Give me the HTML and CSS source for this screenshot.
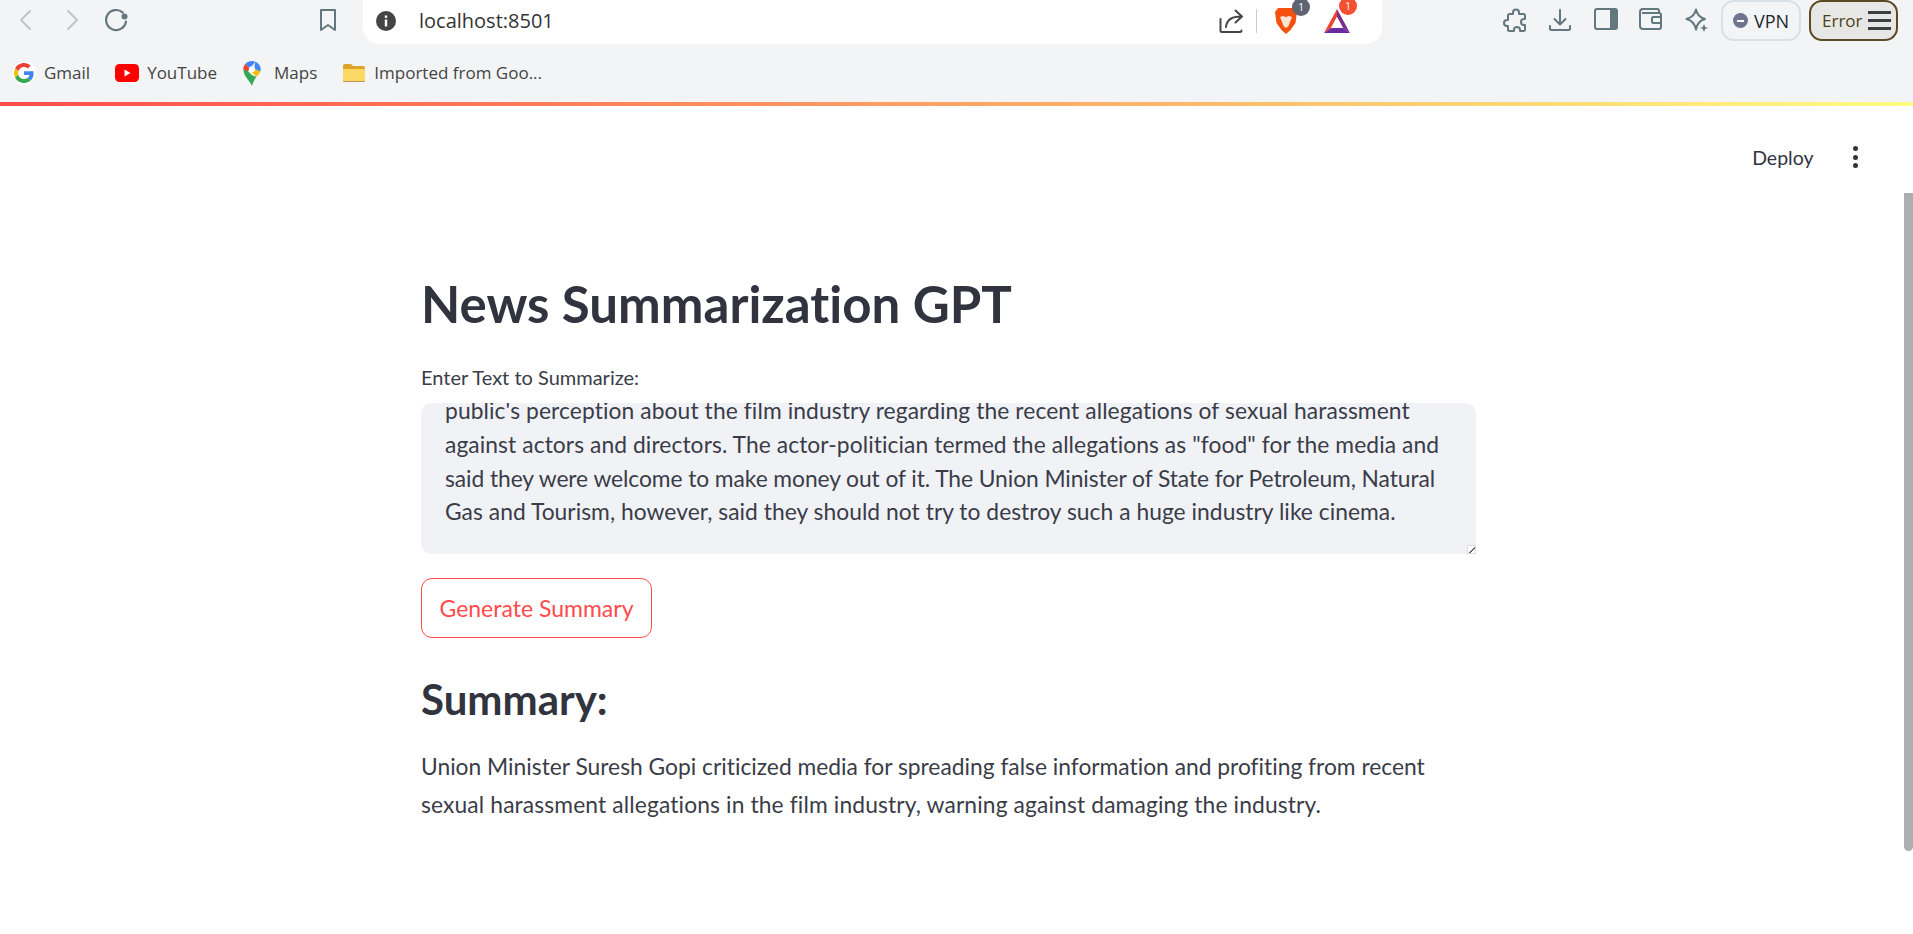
FILE: index.html
```html
<!DOCTYPE html>
<html lang="en">
<head>
    <meta charset="UTF-8" />
    <title>News Summarization GPT</title>
    <link rel="stylesheet" href="styles.css">
</head>
<body>
    <header class="browser">
        <div class="toolbar">
            <div class="nav-group">
                <svg class="icon" width="24" height="24" viewBox="0 0 24 24"><path d="M15 3 6 12l9 9" fill="none" stroke="#bcc5cb" stroke-width="2" stroke-linecap="round" stroke-linejoin="round"/></svg>
                <svg class="icon" width="24" height="24" viewBox="0 0 24 24"><path d="m9 3 9 9-9 9" fill="none" stroke="#bcc5cb" stroke-width="2" stroke-linecap="round" stroke-linejoin="round"/></svg>
                <svg class="icon" width="26" height="26" viewBox="0 0 26 26"><path d="M19.800 5.600A10 10 0 1 0 23 14.500" fill="none" stroke="#63777f" stroke-width="2.200" stroke-linecap="round"/><circle cx="21.500" cy="9.500" r="3" fill="#63777f"/></svg>
            </div>
            <svg class="icon bookmark" width="18" height="24" viewBox="0 0 18 24"><path d="M2 2h14v20l-7-5-7 5z" fill="none" stroke="#63777f" stroke-width="2" stroke-linejoin="round"/></svg>
            <div class="omnibox">
                <svg class="icon" width="22" height="22" viewBox="0 0 22 22"><circle cx="11" cy="11" r="10" fill="#444"/><rect x="9.800" y="9.500" width="2.400" height="7" fill="#fff"/><rect x="9.800" y="5.500" width="2.400" height="2.400" fill="#fff"/></svg>
                <span class="url">localhost:8501</span>
                <div class="omnibox-end">
                    <svg class="icon" width="26" height="26" viewBox="0 0 26 26"><path d="M2.500 11v11.500a1.500 1.500 0 0 0 1.500 1.500h18a1.500 1.500 0 0 0 1.500-1.500M8 19c.6-6.500 5-10.500 15-10.500M17.500 2.500l6.500 6-6.500 6" fill="none" stroke="#454545" stroke-width="2" stroke-linecap="round" stroke-linejoin="round"/></svg>
                    <span class="omni-sep"></span>
                    <div class="ext brave">
                        <svg width="24" height="28" viewBox="0 0 24 28"><path d="M4 1h16l3 4-1.500 11-5 7L12 27l-4.500-4-5-7L1 5z" fill="#f4500f"/><path d="M6 10l3-1 3 1 3-1 3 1-2 5-1.500 4-2.500 2-2.500-2L8 15z" fill="#ffe3d2"/></svg>
                        <span class="badge badge-grey">1</span>
                    </div>
                    <div class="ext bat">
                        <svg width="28" height="26" viewBox="0 0 28 26"><path d="M14 1 1 25l7-5 6-11z" fill="#f0442f"/><path d="M14 1l13 24-7-5-6-11z" fill="#7b2d8e"/><path d="M1 25h26l-7-5H8z" fill="#6a2aa0"/><path d="M14 9 8 20h12z" fill="#fff"/></svg>
                        <span class="badge badge-red">1</span>
                    </div>
                </div>
            </div>
            <div class="actions">
                <svg class="icon puzzle" width="26" height="26" viewBox="0 0 26 26"><path d="M10 4.500a3 3 0 0 1 6 0V6h4.500a1.500 1.500 0 0 1 1.500 1.500V11h-1a3 3 0 0 0 0 6h1v4.500a1.500 1.500 0 0 1-1.500 1.500H17v-1a3 3 0 0 0-6 0v1H6.500A1.500 1.500 0 0 1 5 21.500V18H4a3 3 0 0 1 0-6h1V7.500A1.500 1.500 0 0 1 6.500 6H10z" fill="none" stroke="#63777f" stroke-width="2" stroke-linejoin="round"/></svg>
                <svg class="icon" width="24" height="24" viewBox="0 0 24 24"><path d="M12 2v14M6.500 11l5.500 5.500 5.500-5.500M2 18v2.500A1.500 1.500 0 0 0 3.500 22h17a1.500 1.500 0 0 0 1.500-1.500V18" fill="none" stroke="#63777f" stroke-width="2" stroke-linecap="round" stroke-linejoin="round"/></svg>
                <svg class="icon" width="24" height="22" viewBox="0 0 24 22"><rect x="1" y="1" width="22" height="20" rx="2" fill="none" stroke="#63777f" stroke-width="2"/><rect x="16" y="1" width="7" height="20" fill="#63777f"/></svg>
                <svg class="icon" width="24" height="22" viewBox="0 0 24 22"><path d="M20 5V3a2 2 0 0 0-2-2H4a3 3 0 0 0-3 3v14a3 3 0 0 0 3 3h16a2 2 0 0 0 2-2V7a2 2 0 0 0-2-2H3" fill="none" stroke="#63777f" stroke-width="2"/><rect x="13" y="9" width="9" height="6" rx="1.500" fill="#f3f4f6" stroke="#63777f" stroke-width="2"/></svg>
                <svg class="icon" width="24" height="26" viewBox="0 0 24 26"><path d="M11 1.500c1 5 3.500 8 9 9.500-5.500 1.500-8 4.500-9 10.500C10 15.500 7 12.500 1.500 11 7 9.500 10 6.500 11 1.500z" fill="none" stroke="#63777f" stroke-width="2" stroke-linejoin="round"/><path d="M19 16l1.200 3 2.800 1-2.800 1-1.200 3-1.200-3-2.800-1 2.800-1z" fill="#63777f"/></svg>
                <div class="vpn">
                    <span class="vpn-dot"></span>
                    <span>VPN</span>
                </div>
                <div class="error-btn">
                    <span>Error</span>
                    <div class="burger"><i></i><i></i><i></i></div>
                </div>
            </div>
        </div>
        <div class="bookmarks">
            <a class="bm">
                <span class="g-disc"><svg width="20" height="20" viewBox="0 0 48 48"><path fill="#ea4335" d="M24 9.500c3.500 0 6.700 1.200 9.200 3.600l6.900-6.900C35.900 2.400 30.500 0 24 0 14.600 0 6.500 5.400 2.600 13.200l8 6.200C12.400 13.700 17.700 9.500 24 9.500z"/><path fill="#4285f4" d="M47 24.500c0-1.600-.1-3.100-.4-4.500H24v9h12.900c-.6 3-2.200 5.500-4.800 7.200l7.700 6C44.400 38 47 31.900 47 24.500z"/><path fill="#fbbc05" d="M10.600 28.600C10.100 27.200 9.800 25.600 9.800 24s.3-3.200.8-4.600l-8-6.200C.9 16.500 0 20.100 0 24s.9 7.500 2.600 10.800z"/><path fill="#34a853" d="M24 48c6.500 0 11.900-2.100 15.800-5.800l-7.700-6c-2.100 1.400-4.900 2.300-8.100 2.300-6.300 0-11.600-4.200-13.400-9.900l-8 6.200C6.500 42.600 14.600 48 24 48z"/></svg></span>
                Gmail
            </a>
            <a class="bm">
                <svg width="24" height="18" viewBox="0 0 24 18"><rect width="24" height="18" rx="4.500" fill="#f00"/><path d="M9.500 5.500v7l6-3.500z" fill="#fff"/></svg>
                YouTube
            </a>
            <a class="bm bm-maps">
                <svg width="20" height="26" viewBox="0 0 18 24"><path d="M9 24C7 19 1 15 1 8.500L5 10l4 4 4 1.500C11.500 18 10 20.500 9 24z" fill="#34a853"/><path d="M1 8.500C1 6.500 1.700 5 3 3.500l4 4.500-2 2.500z" fill="#ea4335"/><path d="M3 3.500C4.500 1.800 6.500 1 9 1c1 0 2 .2 3 .5L7 8z" fill="#4285f4"/><path d="M12 1.500c2.800 1 5 3.700 5 7 0 .8-.2 1.600-.4 2.300L11 8z" fill="#4285f4"/><path d="M16.600 10.800c-.7 1.900-2.200 3.200-3.600 4.700L7 9l4-1z" fill="#fbbc05"/><circle cx="9" cy="8.500" r="2.800" fill="#fff"/></svg>
                Maps
            </a>
            <a class="bm">
                <svg width="24" height="20" viewBox="0 0 24 20"><path d="M1 3a2 2 0 0 1 2-2h6l2 2h10a2 2 0 0 1 2 2v13a1 1 0 0 1-1 1H2a1 1 0 0 1-1-1z" fill="#dba52c"/><path d="M1 6h22v12a1 1 0 0 1-1 1H2a1 1 0 0 1-1-1z" fill="#fbd763"/><path d="M1 18h22a1 1 0 0 1-1 1H2a1 1 0 0 1-1-1z" fill="#b99a58"/></svg>
                Imported from Goo...
            </a>
        </div>
    </header>
    <div class="decoration"></div>

    <div class="app-bar">
        <span class="deploy">Deploy</span>
        <div class="kebab"><i></i><i></i><i></i></div>
    </div>

    <main class="main">
        <h1 class="title">News Summarization GPT</h1>
        <label class="field-label">Enter Text to Summarize:</label>
        <div class="textarea">
            <div class="textarea-text">
                <div>public's perception about the film industry regarding the recent allegations of sexual harassment</div>
                <div>against actors and directors. The actor-politician termed the allegations as "food" for the media and</div>
                <div>said they were welcome to make money out of it. The Union Minister of State for Petroleum, Natural</div>
                <div>Gas and Tourism, however, said they should not try to destroy such a huge industry like cinema.</div>
            </div>
            <span class="grip"></span>
        </div>
        <button class="generate">Generate Summary</button>
        <h2 class="subtitle">Summary:</h2>
        <p class="summary">
            <span>Union Minister Suresh Gopi criticized media for spreading false information and profiting from recent</span>
            <span>sexual harassment allegations in the film industry, warning against damaging the industry.</span>
        </p>
    </main>

    <div class="scrollbar"></div>
</body>
</html>
```

FILE: styles.css
```css
body {
    margin: 0;
    height: 934px;
    overflow: hidden;
    background: #fff;
    color: #31333f;
    font-family: 'Lato', sans-serif;
    font-variant-ligatures: none;
}

.icon {
    display: block;
    flex: none;
}

/* BROWSER */
.browser {
    height: 102px;
    background: #f3f4f6;
    font-family: 'Open Sans', sans-serif;
}

.toolbar {
    display: flex;
    height: 51px;
    padding-left: 15px;
}

.nav-group {
    display: flex;
    align-items: center;
    gap: 20px;
    height: 40px;
}

.bookmark {
    margin: 8px 26px 0 190px;
}

.omnibox {
    display: flex;
    align-items: center;
    width: 1019px;
    height: 44px;
    padding-left: 12px;
    padding-bottom: 2px;
    box-sizing: border-box;
    background: #fff;
    border-radius: 0 0 16px 16px;
}

.url {
    margin: 0 0 2px 22px;
    font-size: 20px;
    color: #333;
}

.omnibox-end {
    display: flex;
    align-items: center;
    gap: 12px;
    margin-left: auto;
    margin-right: 31px;
}

.omni-sep {
    width: 1px;
    height: 24px;
    background: #c9cccf;
}

.ext {
    position: relative;
    display: flex;
}

.brave {
    margin-left: 5px;
}

.bat {
    margin-left: 13px;
}

.badge {
    position: absolute;
    top: -9px;
    right: -12px;
    width: 18px;
    height: 18px;
    border-radius: 50%;
    color: #fff;
    font-size: 10px;
    line-height: 18px;
    text-align: center;
}

.badge-grey {
    background: #5f6473;
}

.badge-red {
    top: -11px;
    right: -6px;
    background: #f4502f;
}

.actions {
    display: flex;
    align-items: flex-start;
    margin-left: 121px;
}

.actions > .icon {
    margin: 8px 21.500px 0 0;
}

.actions > .puzzle {
    margin-right: 19px;
}

.vpn {
    display: flex;
    align-items: center;
    gap: 6px;
    width: 80px;
    height: 41px;
    margin-left: -9px;
    padding-left: 10px;
    box-sizing: border-box;
    border: 2px solid #d8e0e6;
    border-radius: 13px;
    font-size: 18px;
    color: #23262e;
}

.vpn-dot {
    position: relative;
    width: 15px;
    height: 15px;
    border-radius: 50%;
    background: #6f7590;
}

.vpn-dot::after {
    content: '';
    position: absolute;
    left: 4px;
    top: 6.500px;
    width: 7px;
    height: 2px;
    background: #fff;
}

.error-btn {
    display: flex;
    align-items: center;
    justify-content: space-between;
    width: 89px;
    height: 41px;
    margin-left: 8px;
    padding: 0 5px 0 11px;
    box-sizing: border-box;
    background: #e7e7e5;
    border: 2px solid #5b4a22;
    border-radius: 13px;
    font-size: 17px;
    color: #4e4120;
}

.burger {
    display: flex;
    flex-direction: column;
    gap: 5.500px;
    width: 23px;
}

.burger i {
    display: block;
    height: 2.500px;
    background: #3d3f40;
}

.bookmarks {
    display: flex;
    align-items: center;
    height: 43px;
    padding-left: 12px;
    font-size: 17px;
    color: #444;
}

.bm {
    display: flex;
    align-items: center;
    gap: 8px;
    margin-right: 25px;
}

.bm-maps {
    gap: 12px;
}

.g-disc {
    display: flex;
    align-items: center;
    justify-content: center;
    width: 24px;
    height: 24px;
    border-radius: 50%;
    background: #fff;
}

.decoration {
    height: 4px;
    background: linear-gradient(90deg, #ff4b4b, #fffd80);
}

/* CABECERA STREAMLIT */
.app-bar {
    display: flex;
    align-items: center;
    justify-content: flex-end;
    gap: 39.500px;
    height: 38px;
    padding: 32px 55px 0 0;
    font-size: 19.500px;
}

.kebab {
    display: flex;
    flex-direction: column;
    gap: 3.500px;
}

.kebab i {
    display: block;
    width: 5px;
    height: 5px;
    border-radius: 50%;
    background: #31333f;
}

/* CONTENIDO */
.main {
    width: 1055px;
    margin-left: 421px;
    color: #3a3c48;
}

.title {
    margin: 0;
    padding-top: 98px;
    color: #31333f;
    font-size: 51px;
    font-weight: 700;
    line-height: 60px;
}

.field-label {
    display: block;
    margin-top: 29px;
    font-size: 20px;
    line-height: 28px;
}

.textarea {
    position: relative;
    height: 151px;
    margin-top: 12px;
    padding-left: 24px;
    box-sizing: border-box;
    overflow: hidden;
    background: #f0f2f6;
    border-radius: 11px 11px 0 11px;
    font-size: 22.800px;
    line-height: 33.800px;
    white-space: nowrap;
}

.textarea-text {
    margin-top: -9px;
}

/* ajuste fino de cada linea */
.textarea-text div:nth-child(1) { letter-spacing: 0.1px; }
.textarea-text div:nth-child(2) { letter-spacing: 0.083px; }
.textarea-text div:nth-child(3) { letter-spacing: -0.074px; }
.textarea-text div:nth-child(4) { letter-spacing: 0.04px; }

.grip {
    position: absolute;
    right: 0;
    bottom: 0;
    width: 9px;
    height: 9px;
    box-sizing: border-box;
    border: 1px solid #ddd;
    background: linear-gradient(135deg, #fff 55%, #666 55%, #666 70%, #fff 70%);
}

.generate {
    display: block;
    width: 231px;
    height: 60px;
    margin-top: 24px;
    padding: 0;
    background: #fff;
    border: 1px solid #ff4b4b;
    border-radius: 11px;
    color: #ff4b4b;
    font-family: inherit;
    font-size: 23px;
    font-variant-ligatures: none;
}

.subtitle {
    margin: 0;
    padding-top: 37px;
    color: #31333f;
    font-size: 42px;
    font-weight: 700;
    line-height: 48px;
}

.summary {
    margin: 25px 0 0;
    font-size: 22.800px;
    line-height: 37.500px;
}

.summary span {
    display: block;
    white-space: nowrap;
}

.summary span:nth-child(2) {
    letter-spacing: 0.13px;
}

.scrollbar {
    position: absolute;
    top: 193px;
    right: 0;
    width: 9px;
    height: 658px;
    background: #aeaeb2;
    border-radius: 0 0 5px 5px;
}
```
